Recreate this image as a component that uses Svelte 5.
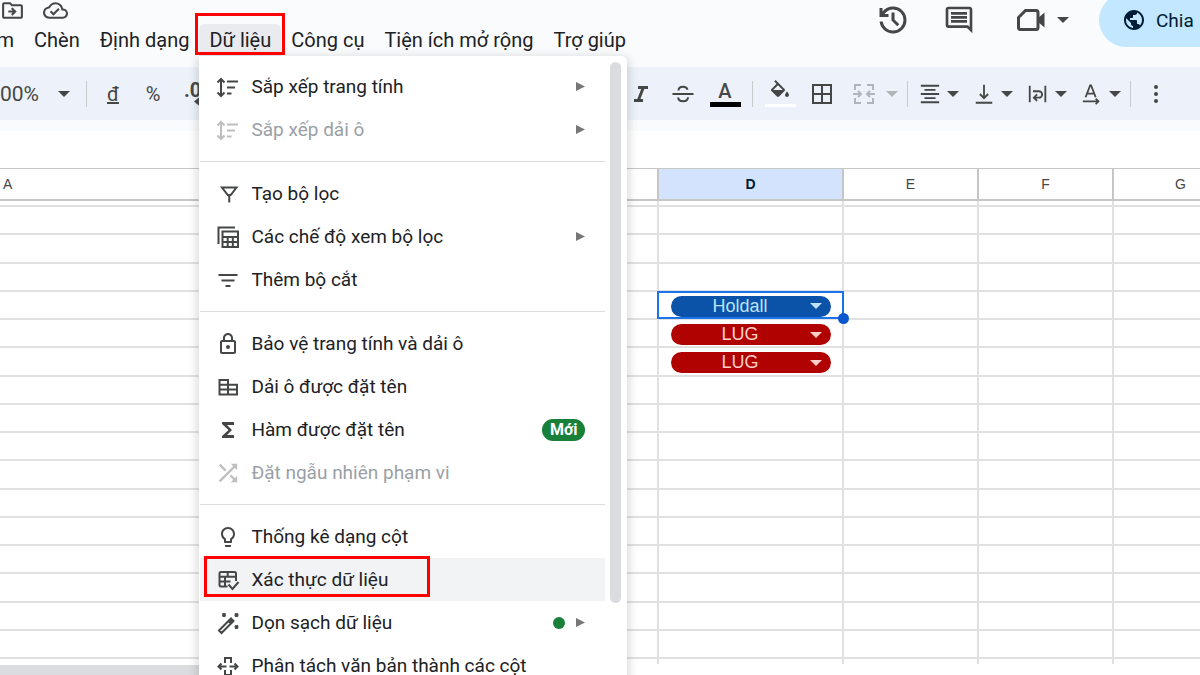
<script lang="ts">
    type Icon = { d: string; stroke?: boolean; box?: string };
    type Item = {
        label: string;
        icon: Icon;
        arrow?: boolean;
        disabled?: boolean;
        badge?: string;
        dot?: boolean;
        active?: boolean;
    };

    const sortIcon: Icon = {
        stroke: true,
        d: 'M5 4v17M1.500 7.500 5 4 8.500 7.500M1.500 17.500 5 21 8.500 17.500M11 6.500h11M11 12.500h8M11 18.500h4.500',
    };

    const groups: Item[][] = [
        [
            { label: 'Sắp xếp trang tính', icon: sortIcon, arrow: true },
            { label: 'Sắp xếp dải ô', icon: sortIcon, arrow: true, disabled: true },
        ],
        [
            {
                label: 'Tạo bộ lọc',
                icon: { stroke: true, d: 'M6 5.500h14.500l-5.800 7.500h-2.900zM13.250 12v8.500' },
            },
            {
                label: 'Các chế độ xem bộ lọc',
                icon: { stroke: true, d: 'M2.500 19V2.500H19M6.500 6.500h15.500v15.500H6.500zM6.500 12h15.500M6.500 17h15.500M11.700 12v10M16.800 12v10' },
                arrow: true,
            },
            {
                label: 'Thêm bộ cắt',
                icon: { stroke: true, d: 'M2.500 7h19M5.500 12.500h13M9.500 18h5' },
            },
        ],
        [
            {
                label: 'Bảo vệ trang tính và dải ô',
                icon: { d: 'M18 8h-1V6c0-2.760-2.240-5-5-5S7 3.240 7 6v2H6c-1.100 0-2 .9-2 2v10c0 1.100.9 2 2 2h12c1.100 0 2-.9 2-2V10c0-1.100-.9-2-2-2zM9 6c0-1.660 1.340-3 3-3s3 1.340 3 3v2H9V6zm9 14H6V10h12v10zm-6-3c1.100 0 2-.9 2-2s-.9-2-2-2-2 .9-2 2 .9 2 2 2z' },
            },
            {
                label: 'Dải ô được đặt tên',
                icon: { stroke: true, d: 'M3.500 5h8.500v14.500H3.500zM12 9.700h9v9.800h-9M3.500 9.700H12M3.500 14.600h17.500' },
            },
            {
                label: 'Hàm được đặt tên',
                icon: { d: 'M18 4H6v2l6.500 6L6 18v2h12v-3h-7l5-5-5-5h7z' },
                badge: 'Mới',
            },
            {
                label: 'Đặt ngẫu nhiên phạm vi',
                icon: {
                    box: '1.500 1.500 21 21',
                    d: 'M10.590 9.170L5.410 4 4 5.410l5.170 5.170 1.420-1.410zM14.500 4l2.040 2.040L4 18.590 5.410 20 17.960 7.460 20 9.500V4h-5.500zm.33 9.410l-1.410 1.410 3.130 3.130L14.500 20H20v-5.500l-2.040 2.040-3.130-3.130z',
                },
                disabled: true,
            },
        ],
        [
            {
                label: 'Thống kê dạng cột',
                icon: { d: 'M9 21c0 .55.45 1 1 1h4c.55 0 1-.45 1-1v-1H9v1zm3-19C8.140 2 5 5.140 5 9c0 2.380 1.190 4.470 3 5.740V17c0 .55.45 1 1 1h6c.55 0 1-.45 1-1v-2.260c1.810-1.270 3-3.360 3-5.740 0-3.860-3.140-7-7-7zm2.850 11.100l-.85.6V16h-4v-2.300l-.85-.6A4.997 4.997 0 0 1 7 9c0-2.760 2.240-5 5-5s5 2.240 5 5c0 1.630-.8 3.160-2.150 4.100z' },
            },
            {
                label: 'Xác thực dữ liệu',
                icon: { stroke: true, d: 'M11.500 18.500H5a1.500 1.500 0 0 1-1.500-1.500V5.500A1.500 1.500 0 0 1 5 4h13.500A1.500 1.500 0 0 1 20 5.500V13M3.500 8.800h16.500M11.700 4v4.800M3.500 13.600h11M9 8.800v9.700M12.500 16.500l4 4.500 6-7' },
                active: true,
            },
            {
                label: 'Dọn sạch dữ liệu',
                icon: {
                    stroke: true,
                    d: 'M3 19.500 12.500 10l2.500 2.500L5.500 22zM12.500 10l2.500-2.500 2.500 2.500-2.500 2.500M13.700 10l2.500 1M15 8.700l1.500 1.500M6.500 2.500l3 3M9.500 2.500l-3 3M19 2.500l3 3M22 2.500l-3 3M19 14.500l3 3M22 14.500l-3 3',
                },
                arrow: true,
                dot: true,
            },
            {
                label: 'Phân tách văn bản thành các cột',
                icon: { stroke: true, d: 'M9 9V4h6v5M9 16v5h6v-5M10.500 12.500H3M13.500 12.500H21M5.500 9.500l-3 3 3 3M18.500 9.500l3 3-3 3' },
            },
        ],
    ];

    const columns = ['A', '', '', 'D', 'E', 'F', 'G'];
    const rows = Array.from({ length: 18 }, (_, i) => i);

    let chips = $state<Record<number, string>>({ 4: 'Holdall', 5: 'LUG', 6: 'LUG' });
    const selectedRow = 4;
</script>

{#snippet caret()}
    <svg class="caret" viewBox="0 0 12 6" aria-hidden="true"><path d="M0 0h12L6 6z" /></svg>
{/snippet}

{#snippet menuButton(label: string)}
    <button class="menu-button">{label}</button>
{/snippet}

<div class="page">
    <header>
        <div class="title-side">
            <div class="doc-icons">
                <button aria-label="Di chuyển">
                    <svg viewBox="0 0 24 24"><path d="M20 6h-8l-2-2H4c-1.100 0-2 .9-2 2v12c0 1.100.9 2 2 2h16c1.100 0 2-.9 2-2V8c0-1.100-.9-2-2-2zm0 12H4V6h5.170l2 2H20v10zM12.160 12H8v2h4.160l-1.590 1.590L11.990 17 16 13.010 11.990 9l-1.410 1.410z" /></svg>
                </button>
                <button aria-label="Trạng thái">
                    <svg viewBox="0 0 24 24"><path d="M19.350 10.040A7.490 7.490 0 0 0 12 4C9.110 4 6.600 5.640 5.350 8.040A5.994 5.994 0 0 0 0 14c0 3.310 2.690 6 6 6h13c2.760 0 5-2.240 5-5 0-2.640-2.050-4.780-4.650-4.960zM19 18H6c-2.210 0-4-1.790-4-4 0-2.050 1.530-3.760 3.560-3.970l1.070-.11.5-.95A5.469 5.469 0 0 1 12 6c2.620 0 4.880 1.860 5.390 4.430l.3 1.500 1.530.11A2.980 2.980 0 0 1 22 15c0 1.650-1.350 3-3 3zm-9-3.820-2.090-2.090L6.500 13.500 10 17l6.010-6.010-1.410-1.410z" /></svg>
                </button>
            </div>
            <nav class="menubar">
                <button class="menu-button first">m</button>
                {@render menuButton('Chèn')}
                {@render menuButton('Định dạng')}
                <div class="menu-anchor">
                    <button class="menu-button open" aria-expanded="true">Dữ liệu</button>
                    <div class="dropdown">
                        <div class="items">
                            {#each groups as group}
                                <div class="group">
                                    {#each group as item}
                                        <button class="item" class:active={item.active} disabled={item.disabled}>
                                            <svg class="item-icon" class:stroke={item.icon.stroke} viewBox={item.icon.box ?? '0 0 24 24'} aria-hidden="true">
                                                <path d={item.icon.d} />
                                            </svg>
                                            <span class="label">{item.label}</span>
                                            {#if item.badge}<span class="badge">{item.badge}</span>{/if}
                                            {#if item.dot}<span class="dot"></span>{/if}
                                            {#if item.arrow}
                                                <svg class="arrow" viewBox="0 0 10 10" aria-hidden="true"><path d="M0 0l10 5-10 5z" /></svg>
                                            {/if}
                                        </button>
                                    {/each}
                                </div>
                            {/each}
                        </div>
                        <div class="menu-scroll"></div>
                    </div>
                </div>
                {@render menuButton('Công cụ')}
                {@render menuButton('Tiện ích mở rộng')}
                {@render menuButton('Trợ giúp')}
            </nav>
        </div>
        <div class="actions">
            <button aria-label="Lịch sử">
                <svg viewBox="0 -960 960 960"><path d="M480-120q-138 0-240.500-91.500T122-440h82q14 104 92.500 172T480-200q117 0 198.500-81.500T760-480q0-117-81.500-198.500T480-760q-69 0-129 32t-101 88h110v80H120v-240h80v94q51-64 124.500-99T480-840q75 0 140.500 28.500t114 77q48.500 48.500 77 114T840-480q0 75-28.500 140.500t-77 114q-48.500 48.500-114 77T480-120Zm112-192L440-464v-216h80v184l128 128-56 56Z" /></svg>
            </button>
            <button class="comments" aria-label="Nhận xét">
                <svg viewBox="-1.500 -1.500 27 27"><path d="M21.990 4c0-1.100-.89-2-1.990-2H4c-1.100 0-2 .9-2 2v12c0 1.100.9 2 2 2h14l4 4-.01-18zM20 4v13.170L18.830 16H4V4h16zM6 12h12v2H6zm0-3h12v2H6zm0-3h12v2H6z" /></svg>
            </button>
            <button class="meet" aria-label="Cuộc gọi">
                <svg viewBox="0 0 36 36">
                    <path class="outline" d="M12.500 8.500H23a2 2 0 0 1 2 2v15a2 2 0 0 1-2 2H7.500a2 2 0 0 1-2-2V15.500z" />
                    <path d="M25 16l6.500-5.500v15L25 20z" />
                </svg>
                {@render caret()}
            </button>
            <button class="share">
                <svg viewBox="0 0 24 24"><path d="M12 2C6.480 2 2 6.480 2 12s4.480 10 10 10 10-4.480 10-10S17.520 2 12 2zm-1 17.930c-3.950-.49-7-3.850-7-7.930 0-.62.08-1.210.21-1.790L9 15v1c0 1.100.9 2 2 2v1.930zm6.900-2.540c-.26-.81-1-1.390-1.900-1.390h-1v-3c0-.55-.45-1-1-1H8v-2h2c.55 0 1-.45 1-1V7h2c1.100 0 2-.9 2-2v-.41c2.930 1.190 5 4.060 5 7.410 0 2.080-.8 3.970-2.100 5.390z" /></svg>
                Chia
            </button>
        </div>
    </header>

    <div class="toolbar">
        <div class="tools">
            <div class="zoom">
                <input aria-label="Thu phóng" value="00%">
                <button class="drop" aria-label="Mở">{@render caret()}</button>
            </div>
            <span class="divider"></span>
            <button class="text-tool underlined">đ</button>
            <button class="text-tool">%</button>
            <button class="text-tool" aria-label="Giảm số thập phân">
                <svg viewBox="0 0 30 30"><text x="6" y="18">.0</text><path d="M16 22.500l6-5v4h7v2h-7v4z" /></svg>
            </button>
        </div>
        <div class="tools end">
            <button class="tool" aria-label="Nghiêng">
                <svg viewBox="0 0 24 24"><path d="M9 4v3h3.200l-3.900 10H5v3h9v-3h-2.600l3.900-10H19V4z" /></svg>
            </button>
            <button class="tool" aria-label="Gạch ngang">
                <svg class="stroke" viewBox="0 0 24 24"><path d="M1.500 12h21M7.500 8.500c0-2.500 2-3.700 4.500-3.700s4 1 4.500 3M7 15.500c.5 2.500 2.500 3.700 5 3.700s5-1.200 5-4" /></svg>
            </button>
            <button class="tool swatch text-color">A</button>
            <span class="divider"></span>
            <button class="tool swatch fill-color" aria-label="Màu nền">
                <svg viewBox="0 0 24 24"><path d="M16.560 8.940L7.620 0 6.210 1.410l2.380 2.380-5.150 5.150c-.59.59-.59 1.540 0 2.120l5.500 5.500c.29.29.68.44 1.060.44s.77-.15 1.060-.44l5.500-5.500c.59-.58.59-1.530 0-2.120zM5.210 10L10 5.210 14.790 10zM19 11.500s-2 2.170-2 3.500c0 1.100.9 2 2 2s2-.9 2-2c0-1.330-2-3.500-2-3.500z" /></svg>
            </button>
            <button class="tool" aria-label="Đường viền">
                <svg class="stroke" viewBox="0 0 24 24"><path d="M3 3h18v18H3zM12 3v18M3 12h18" /></svg>
            </button>
            <div class="split">
                <button class="tool" aria-label="Hợp nhất" disabled>
                    <svg class="stroke" viewBox="0 0 24 24"><path d="M9 3H3v5M15 3h6v5M9 21H3v-5M15 21h6v-5M1 12h8M6 9l3 3-3 3M23 12h-8M18 9l-3 3 3 3" /></svg>
                </button>
                <button class="drop" aria-label="Mở" disabled>{@render caret()}</button>
            </div>
            <span class="divider"></span>
            <div class="aligns">
                <div class="split narrow">
                    <button class="tool" aria-label="Căn ngang">
                        <svg class="stroke" viewBox="0 0 24 24"><path d="M2 3h20M6 7.500h12M2 12h20M6 16.500h12M2 21h20" /></svg>
                    </button>
                    <button class="drop" aria-label="Mở">{@render caret()}</button>
                </div>
                <div class="split narrow">
                    <button class="tool" aria-label="Căn dọc">
                        <svg class="stroke" viewBox="0 0 24 24"><path d="M3 21.500h18M12 2v14.500M7.500 12l4.500 4.500 4.500-4.500" /></svg>
                    </button>
                    <button class="drop" aria-label="Mở">{@render caret()}</button>
                </div>
                <div class="split narrow">
                    <button class="tool" aria-label="Xuống dòng">
                        <svg class="stroke" viewBox="0 0 24 24"><path d="M3 3v18M20 3v18M6.500 9h6.500a3.500 3.500 0 0 1 0 7H8M11 12.500L7.500 16l3.500 3.500" /></svg>
                    </button>
                    <button class="drop" aria-label="Mở">{@render caret()}</button>
                </div>
                <div class="split narrow">
                    <button class="tool" aria-label="Xoay văn bản">
                        <svg class="stroke" viewBox="0 0 24 24"><path d="M5 15.500L10 2.500h1l5 13M6.500 11.500h8M2 20h17M16 17l3 3-3 3" /></svg>
                    </button>
                    <button class="drop" aria-label="Mở">{@render caret()}</button>
                </div>
            </div>
            <span class="divider"></span>
            <button class="tool more" aria-label="Thêm">
                <svg viewBox="0 0 24 24"><circle cx="12" cy="5" r="2" /><circle cx="12" cy="12" r="2" /><circle cx="12" cy="19" r="2" /></svg>
            </button>
        </div>
    </div>

    <div class="formula-bar"></div>

    <table>
        <thead>
            <tr>
                {#each columns as column}
                    <th class:selected={column === 'D'} class:cut={column === 'A'}>{column}</th>
                {/each}
            </tr>
        </thead>
        <tbody>
            {#each rows as row}
                <tr>
                    {#each columns as column}
                        <td class:current={column === 'D' && row === selectedRow}>
                            {#if column === 'D' && chips[row]}
                                <div class="chip" class:blue={chips[row] === 'Holdall'}>
                                    <select aria-label="D{row}" bind:value={chips[row]}>
                                        <option>Holdall</option>
                                        <option>LUG</option>
                                    </select>
                                    {@render caret()}
                                </div>
                            {/if}
                        </td>
                    {/each}
                </tr>
            {/each}
        </tbody>
    </table>
    <div class="sheet-scroll"></div>
</div>

<style>
    :global(body) {
        margin: 0;
        overflow: hidden;
    }

    .page {
        display: flex;
        flex-direction: column;
        height: 100vh;
        overflow: hidden;
        background: #fff;
        color: #202124;
        font-family: Roboto, "Liberation Sans", sans-serif;
        font-size: 19px;
    }

    button, input, select {
        margin: 0;
        padding: 0;
        border: 0;
        background: none;
        color: inherit;
        font: inherit;
    }

    button {
        display: flex;
        align-items: center;
        justify-content: center;
    }

    svg {
        flex: none;
        fill: #444746;
    }

    svg.stroke {
        fill: none;
        stroke: #444746;
        stroke-width: 2;
    }

    .caret {
        width: 12px;
        height: 6px;
    }

    header {
        display: flex;
        justify-content: space-between;
        height: 67px;
        background: #f9fbfd;
    }

    .doc-icons {
        display: flex;
        gap: 18px;
        height: 24px;
    }

    .doc-icons button {
        height: 20px;
    }

    .doc-icons svg {
        width: 25px;
        height: 25px;
    }

    .menubar {
        display: flex;
        height: 32px;
    }

    .menu-button {
        height: 32px;
        padding: 0 10px;
        font-size: 20px;
        white-space: nowrap;
    }

    .menu-button.first {
        width: 24px;
        justify-content: flex-end;
    }

    .menu-anchor {
        position: relative;
        z-index: 2;
    }

    .menu-button.open {
        border-radius: 6px 6px 0 0;
        background: #e9ebee;
    }

    .menu-button.open::after {
        content: '';
        position: absolute;
        z-index: 1;
        inset: -11px -4px 1px;
        border: 3px solid #f00;
    }

    .dropdown {
        position: absolute;
        top: 32px;
        left: 0;
        display: flex;
        gap: 5px;
        width: 428px;
        box-sizing: border-box;
        padding: 9px 0 9px 1px;
        border-radius: 0 6px 6px 6px;
        background: #fff;
        box-shadow: 0 3px 10px 2px rgba(60, 64, 67, 0.2);
    }

    .items {
        width: 405px;
    }

    .group + .group {
        margin-top: 10px;
        padding-top: 10px;
        border-top: 1px solid #dadce0;
    }

    .item {
        position: relative;
        gap: 11px;
        width: 100%;
        height: 43px;
        padding: 0 20px 0 16px;
        justify-content: flex-start;
        white-space: nowrap;
    }

    .item.active {
        background: #f1f3f4;
    }

    .item.active::after {
        content: '';
        position: absolute;
        inset: -2px 175px 4px 4px;
        border: 3px solid #f00;
    }

    .item:disabled .label {
        color: #9aa0a6;
    }

    .item:disabled .item-icon {
        opacity: 0.35;
    }

    .item-icon {
        width: 24px;
        height: 24px;
    }

    .label {
        flex: 1;
        text-align: left;
    }

    .badge {
        padding: 1px 8px;
        border-radius: 11px;
        background: #188038;
        color: #fff;
        font-size: 16px;
        font-weight: 700;
        line-height: 20px;
    }

    .dot {
        width: 12px;
        height: 12px;
        border-radius: 50%;
        background: #188038;
    }

    .arrow {
        width: 9px;
        height: 9px;
        fill: #777;
    }

    .menu-scroll {
        width: 11px;
        height: 541px;
        margin-top: -3px;
        border-radius: 6px;
        background: #dadce0;
    }

    .actions {
        display: flex;
        align-items: flex-start;
    }

    .actions button {
        height: 40px;
        margin-right: 30px;
    }

    .actions .comments {
        margin-right: 36px;
    }

    .actions svg:not(.caret) {
        width: 36px;
        height: 36px;
    }

    .actions .meet {
        gap: 8px;
    }

    .outline {
        fill: none;
        stroke: #444746;
        stroke-width: 3;
    }

    .actions .share {
        gap: 10px;
        width: 101px;
        height: 54px;
        margin: -7px 0 0;
        padding-left: 23px;
        justify-content: flex-start;
        border-radius: 27px 0 0 27px;
        background: #c2e7ff;
        color: #001d35;
    }

    .actions .share svg {
        width: 24px;
        height: 24px;
        fill: #001d35;
    }

    .toolbar {
        display: flex;
        justify-content: space-between;
        height: 53px;
        background: #edf2fa;
        color: #444746;
    }

    .tools, .split, .zoom, .aligns {
        display: flex;
        align-items: center;
    }

    .tools {
        gap: 2px;
    }

    .tools.end {
        padding-right: 26px;
    }

    .aligns {
        gap: 8px;
    }

    .zoom {
        width: 79px;
    }

    .zoom input {
        width: 56px;
        font-size: 21px;
    }

    .divider {
        width: 1px;
        height: 26px;
        margin: 0 5px;
        background: #c7c9cc;
    }

    .tool, .text-tool {
        width: 40px;
        height: 40px;
    }

    .tool svg {
        width: 24px;
        height: 24px;
    }

    .text-tool {
        width: 38px;
        font-size: 20px;
    }

    .text-tool.underlined {
        text-decoration: underline;
    }

    .text-tool svg {
        width: 30px;
        height: 30px;
        font-weight: 700;
    }

    .narrow .tool {
        width: 30px;
    }

    .narrow .tool svg {
        width: 22px;
        height: 22px;
    }

    .tool.more {
        width: 36px;
    }

    .drop {
        width: 16px;
        height: 40px;
    }

    button:disabled > svg:not(.item-icon):not(.arrow) {
        opacity: 0.35;
    }

    .swatch {
        flex-direction: column;
        justify-content: flex-end;
        height: 27px;
        font-size: 20px;
        font-weight: 500;
        line-height: 22px;
    }

    .swatch::after {
        content: '';
        width: 31px;
        height: 5px;
        background: #000;
    }

    .fill-color::after {
        background: #fff;
    }

    .formula-bar {
        height: 37px;
        border-top: 11px solid #f9fbfd;
    }

    table {
        display: flex;
        flex: 1;
        flex-direction: column;
        min-height: 0;
        font-family: "Liberation Sans", Arial, sans-serif;
    }

    tr {
        display: grid;
        grid-template-columns: 200px 229px 230px 185px 135px 135px 135px;
    }

    tbody {
        display: grid;
        flex: 1;
        grid-template-rows: 6px repeat(16, 1fr) 5px;
    }

    th {
        height: 30px;
        padding: 0;
        border: solid #c4c7c5;
        border-width: 1px 2px 2px 0;
        font-size: 14px;
        font-weight: 400;
        line-height: 30px;
        color: #444746;
    }

    th.selected {
        background: #d3e3fd;
        color: #001d35;
        font-weight: 700;
    }

    th.cut {
        padding-left: 3px;
        text-align: left;
    }

    th:nth-child(-n + 2), td:nth-child(-n + 2) {
        border-right-color: transparent;
    }

    td {
        position: relative;
        display: flex;
        align-items: center;
        padding: 3px 11px 0 12px;
        border: solid #e1e1e1;
        border-width: 0 2px 2px 0;
    }

    tr:first-child td {
        padding-top: 0;
    }

    tr:last-child td {
        border-bottom: 0;
    }

    td.current::before {
        content: '';
        position: absolute;
        inset: -1px -2px -1px -2px;
        border: 2px solid #1a73e8;
    }

    td.current::after {
        content: '';
        position: absolute;
        z-index: 1;
        right: -7px;
        bottom: -6px;
        width: 11px;
        height: 11px;
        border-radius: 50%;
        background: #0b57d0;
    }

    .chip {
        position: relative;
        display: flex;
        align-items: center;
        flex: 1;
        height: 21px;
        border-radius: 11px;
        background: #b10202;
        color: #ffcfc9;
    }

    .chip.blue {
        background: #0a53a8;
        color: #bfe1f6;
    }

    .chip select {
        width: 100%;
        height: 21px;
        padding-right: 22px;
        appearance: none;
        font-size: 18px;
        line-height: 21px;
        text-align: center;
        text-align-last: center;
    }

    .chip .caret {
        position: absolute;
        right: 9px;
        fill: currentColor;
        pointer-events: none;
    }

    .sheet-scroll {
        width: 25%;
        height: 10px;
        margin-top: 1px;
        background: #dadce0;
    }
</style>
